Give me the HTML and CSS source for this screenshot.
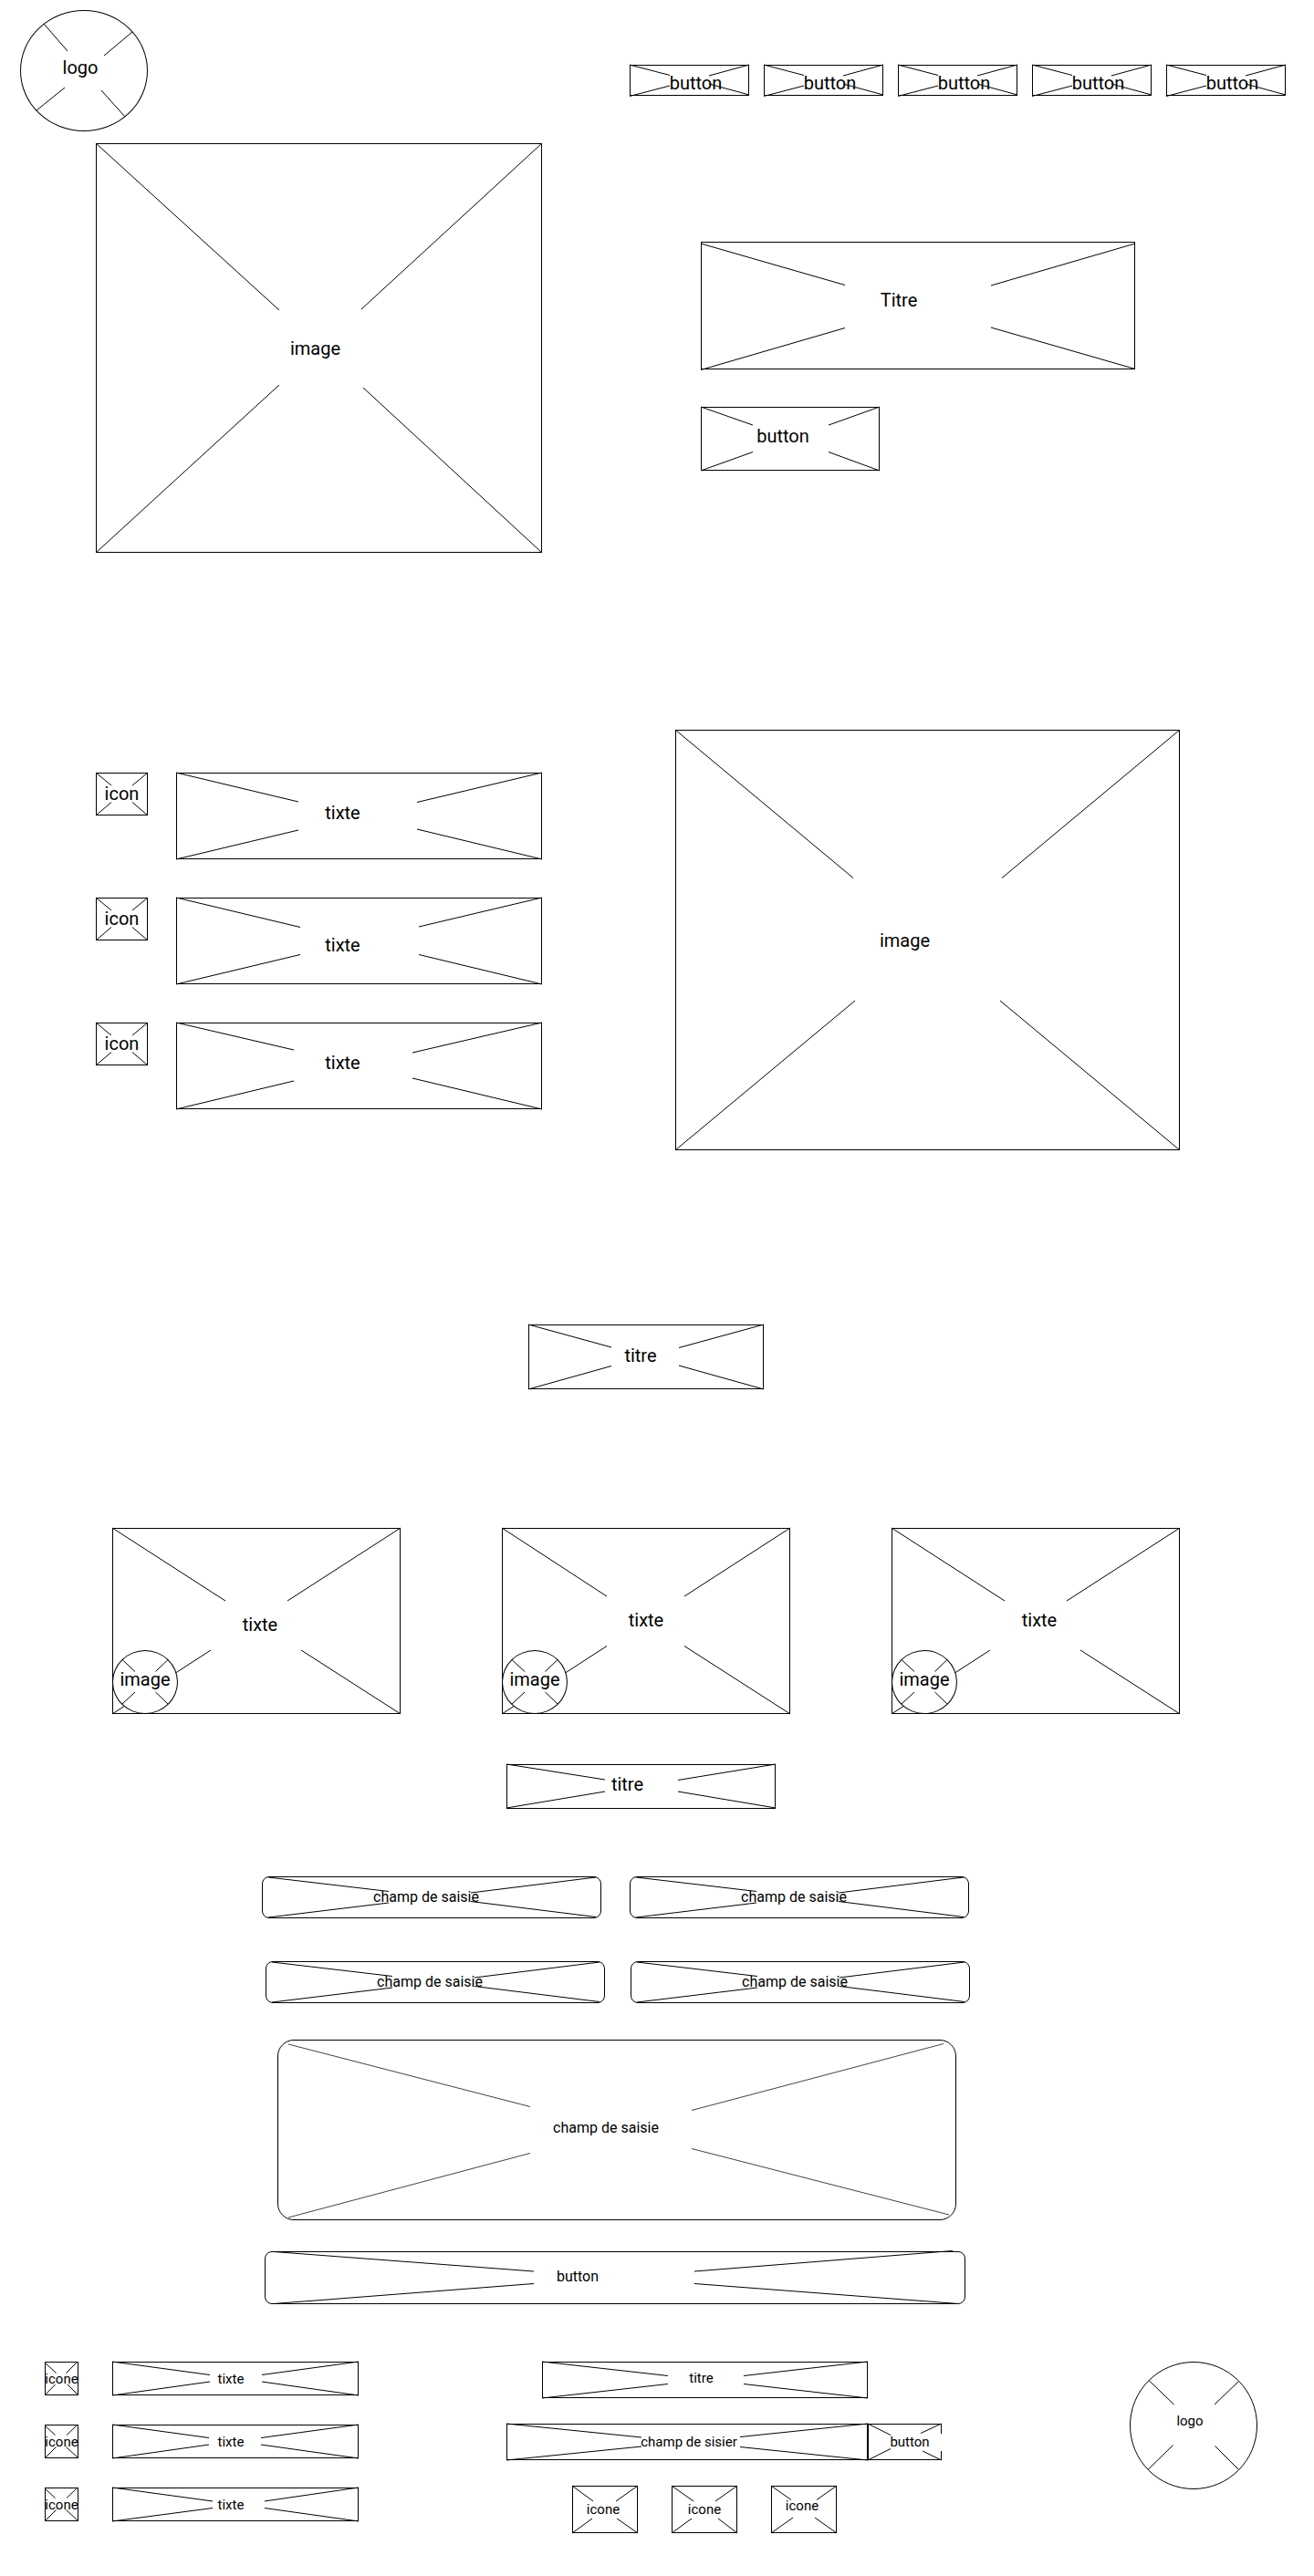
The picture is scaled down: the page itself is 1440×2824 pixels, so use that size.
FILE: index.html
```html
<!DOCTYPE html>
<html lang="fr">
<head>
<meta charset="utf-8">
<meta name="viewport" content="width=device-width, initial-scale=1">
<title>Wireframe</title>
<link rel="stylesheet" href="styles.css">
</head>
<body>
<header class="header">
  <a class="box round logo" href="#"><svg class="cross" viewBox="0 0 140 133" preserveAspectRatio="none"><path d="M26 15L52 45M123 24L92 50M49 85L18 110M89 88L115 117"/></svg>logo</a>
  <nav class="nav">
    <button class="box nav-button" type="button"><svg class="cross" viewBox="0 0 131 34" preserveAspectRatio="none"><path d="M0 0L44 11.5M131 0L87 12M44 23L0 34.5M87 21L131 33"/></svg>button</button>
    <button class="box nav-button" type="button"><svg class="cross" viewBox="0 0 131 34" preserveAspectRatio="none"><path d="M0 0L44 11.5M131 0L87 12M44 23L0 34.5M87 21L131 33"/></svg>button</button>
    <button class="box nav-button" type="button"><svg class="cross" viewBox="0 0 131 34" preserveAspectRatio="none"><path d="M0 0L44 11.5M131 0L87 12M44 23L0 34.5M87 21L131 33"/></svg>button</button>
    <button class="box nav-button" type="button"><svg class="cross" viewBox="0 0 131 34" preserveAspectRatio="none"><path d="M0 0L44 11.5M131 0L87 12M44 23L0 34.5M87 21L131 33"/></svg>button</button>
    <button class="box nav-button" type="button"><svg class="cross" viewBox="0 0 131 34" preserveAspectRatio="none"><path d="M0 0L44 11.5M131 0L87 12M44 23L0 34.5M87 21L131 33"/></svg>button</button>
  </nav>
</header>

<main>
  <section class="hero">
    <div class="box hero-image"><svg class="cross" viewBox="0 0 489 449" preserveAspectRatio="none"><path d="M0 0L201 183M489 0L291 182M201 265L0 449M293 268L489 449"/></svg>image</div>
    <div class="hero-content">
      <h1 class="box hero-title"><svg class="cross" viewBox="0 0 476 140" preserveAspectRatio="none"><path d="M0 2L158 47.5M476 2L318 48M158 94.5L0 140.5M318 94L476 139.5"/></svg>Titre</h1>
      <button class="box hero-button" type="button"><svg class="cross" viewBox="0 0 196 70" preserveAspectRatio="none"><path d="M0 0L57 20M196 0L140 20M57 49.5L0 70M140 49.5L196 70"/></svg>button</button>
    </div>
  </section>

  <section class="features">
    <ul class="feature-list">
      <li class="feature">
        <span class="box feature-icon"><svg class="cross" viewBox="0 0 57 47" preserveAspectRatio="none"><path d="M0 0L17 14M57 0L40 14M17 32.5L0 47M40 32.5L57 47"/></svg>icon</span>
        <p class="box feature-text raised"><svg class="cross" viewBox="0 0 401 95" preserveAspectRatio="none"><path d="M0 0L134 32M401 0L264 32.5M134 63L0 95M264 62L401 95"/></svg>tixte</p>
      </li>
      <li class="feature">
        <span class="box feature-icon"><svg class="cross" viewBox="0 0 57 47" preserveAspectRatio="none"><path d="M0 0L17 14M57 0L40 14M17 32.5L0 47M40 32.5L57 47"/></svg>icon</span>
        <p class="box feature-text lowered"><svg class="cross" viewBox="0 0 401 95" preserveAspectRatio="none"><path d="M0 0L136 32.5M401 0L266 32M136 62.5L0 95M266 62.5L401 95"/></svg>tixte</p>
      </li>
      <li class="feature">
        <span class="box feature-icon"><svg class="cross" viewBox="0 0 57 47" preserveAspectRatio="none"><path d="M0 0L17 14M57 0L40 14M17 32.5L0 47M40 32.5L57 47"/></svg>icon</span>
        <p class="box feature-text raised"><svg class="cross" viewBox="0 0 401 95" preserveAspectRatio="none"><path d="M0 0L129 30M401 0L259 33M129 64L0 95M259 61L401 95"/></svg>tixte</p>
      </li>
    </ul>
    <div class="box feature-image"><svg class="cross" viewBox="0 0 553 461" preserveAspectRatio="none"><path d="M0 0L195 162.5M553 0L358 162.5M197 297L0 461M356 297L553 461"/></svg>image</div>
  </section>

  <section class="testimonials">
    <h2 class="box testimonials-title"><svg class="cross" viewBox="0 0 258 71" preserveAspectRatio="none"><path d="M0 0L91 25M258 0L165 25.5M91 45.5L0 71M165 45L258 71"/></svg>titre</h2>
    <div class="cards">
      <article class="box card card-low"><svg class="cross" viewBox="0 0 316 204" preserveAspectRatio="none"><path d="M0 0L124 80M316 0L192 80M108 134L0 204M207 134L316 204"/></svg>tixte
        <div class="box round avatar"><svg class="cross" viewBox="0 0 72 70" preserveAspectRatio="none"><path d="M11 10.5L25 23.5M61 10.5L47.5 23.5M25 46L11 59M47.5 46L61 59"/></svg>image</div>
      </article>
      <article class="box card"><svg class="cross" viewBox="0 0 316 204" preserveAspectRatio="none"><path d="M0 0L115 75M316 0L200 75M115 129.5L0 204M200 129.5L316 204"/></svg>tixte
        <div class="box round avatar"><svg class="cross" viewBox="0 0 72 70" preserveAspectRatio="none"><path d="M11 10.5L25 23.5M61 10.5L47.5 23.5M25 46L11 59M47.5 46L61 59"/></svg>image</div>
      </article>
      <article class="box card card-shifted"><svg class="cross" viewBox="0 0 316 204" preserveAspectRatio="none"><path d="M0 0L124 80M316 0L192 80M108 134L0 204M207 134L316 204"/></svg>tixte
        <div class="box round avatar"><svg class="cross" viewBox="0 0 72 70" preserveAspectRatio="none"><path d="M11 10.5L25 23.5M61 10.5L47.5 23.5M25 46L11 59M47.5 46L61 59"/></svg>image</div>
      </article>
    </div>
  </section>

  <section class="contact">
    <h2 class="box contact-title"><svg class="cross" viewBox="0 0 295 49" preserveAspectRatio="none"><path d="M0 0L108 17M295 0L188 17.5M108 30L0 48M188 30L295 48"/></svg>titre</h2>
    <form class="form">
      <div class="form-row">
        <div class="field"><input class="input" type="text" placeholder="champ de saisie" aria-label="champ de saisie"><svg class="cross" viewBox="0 0 372 46" preserveAspectRatio="none"><path d="M7 1L139 16.5M366 1L229 18M139 29L7 45M229 27.5L366 44.5"/></svg></div>
        <div class="field"><input class="input" type="text" placeholder="champ de saisie" aria-label="champ de saisie"><svg class="cross" viewBox="0 0 372 46" preserveAspectRatio="none"><path d="M7 1L139 16.5M366 1L229 18M139 29L7 45M229 27.5L366 44.5"/></svg></div>
      </div>
      <div class="form-row form-row-inset">
        <div class="field"><input class="input" type="text" placeholder="champ de saisie" aria-label="champ de saisie"><svg class="cross" viewBox="0 0 372 46" preserveAspectRatio="none"><path d="M7 1L139 16.5M366 1L229 18M139 29L7 45M229 27.5L366 44.5"/></svg></div>
        <div class="field"><input class="input" type="text" placeholder="champ de saisie" aria-label="champ de saisie"><svg class="cross" viewBox="0 0 372 46" preserveAspectRatio="none"><path d="M7 1L139 16.5M366 1L229 18M139 29L7 45M229 27.5L366 44.5"/></svg></div>
      </div>
      <div class="field message"><textarea class="textarea" placeholder="champ de saisie" aria-label="champ de saisie"></textarea><svg class="cross light" viewBox="0 0 744 198" preserveAspectRatio="none"><path d="M12 5L277 73.5M730 4.5L454 77.5M277 124.5L12 195M454 119.5L736 192"/></svg></div>
      <button class="box submit" type="button"><svg class="cross" viewBox="0 0 768 58" preserveAspectRatio="none"><path d="M10 0.5L295 22M754 -0.5L471 22M295 35.5L10 57.5M471 35.5L760 57.5"/></svg>button</button>
    </form>
  </section>
</main>

<footer class="footer">
  <ul class="info-list">
    <li class="info">
      <span class="box info-icon"><svg class="cross" viewBox="0 0 37 37" preserveAspectRatio="none"><path d="M0 1L12.5 12.5M36 0L23.5 12.5M11.5 25L0 37M25 25L37 37"/></svg>icone</span>
      <p class="box info-text"><svg class="cross" viewBox="0 0 270 37" preserveAspectRatio="none"><path d="M0 0L107 14.5M270 0L164 14.5M107 22L0 37M164 22L270 37"/></svg>tixte</p>
    </li>
    <li class="info">
      <span class="box info-icon"><svg class="cross" viewBox="0 0 37 37" preserveAspectRatio="none"><path d="M0 1L11.5 11.5M36 0L24 11.5M12.5 24.5L0 37M23.5 24.5L37 37"/></svg>icone</span>
      <p class="box info-text"><svg class="cross" viewBox="0 0 270 37" preserveAspectRatio="none"><path d="M0 0L106 14.5M270 0L163 14.5M106 22L0 37M163 22L270 37"/></svg>tixte</p>
    </li>
    <li class="info">
      <span class="box info-icon"><svg class="cross" viewBox="0 0 37 37" preserveAspectRatio="none"><path d="M0 1L11.5 11.5M36 0L24 11.5M12.5 24.5L0 37M23.5 24.5L37 37"/></svg>icone</span>
      <p class="box info-text"><svg class="cross" viewBox="0 0 270 37" preserveAspectRatio="none"><path d="M0 0L110 15M270 0L167 15M110 22.5L0 37M167 22.5L270 37"/></svg>tixte</p>
    </li>
  </ul>

  <div class="newsletter">
    <h3 class="box newsletter-title"><svg class="cross" viewBox="0 0 357 40" preserveAspectRatio="none"><path d="M0 0L138 15.5M357 0L221 15.5M138 24.5L0 40M221 24.5L357 40"/></svg>titre</h3>
    <form class="newsletter-form">
      <div class="field"><input class="input newsletter-input" type="email" placeholder="champ de sisier" aria-label="champ de sisier"><svg class="cross" viewBox="0 0 396 40" preserveAspectRatio="none"><path d="M0 0L148 15M396 0L256 14.5M148 25L0 40M256 25.5L396 40"/></svg></div>
      <button class="box newsletter-button" type="button"><svg class="cross newsletter-cross" viewBox="0 0 81 40" preserveAspectRatio="none"><path d="M0 0L25 12.5M80.5 0L58 10.5M25 27.5L0 40M60 30L80.5 40M80.5 0V11M80.5 30V40"/></svg>button</button>
    </form>
    <div class="socials">
      <a class="box social" href="#"><svg class="cross" viewBox="0 0 72 52" preserveAspectRatio="none"><path d="M0 0L23 17M72 0L48 17M22 36L0 52M49 36L72 52"/></svg>icone</a>
      <a class="box social social-centered" href="#"><svg class="cross" viewBox="0 0 72 52" preserveAspectRatio="none"><path d="M0 0L24 17M72 0L48 17M22 36L0 52M51 36L72 52"/></svg>icone</a>
      <a class="box social social-raised" href="#"><svg class="cross" viewBox="0 0 72 52" preserveAspectRatio="none"><path d="M0 0L22 15.5M72 0L50 15.5M24 35L0 52M48 35L72 52"/></svg>icone</a>
    </div>
  </div>

  <a class="box round footer-logo" href="#"><svg class="cross" viewBox="0 0 140 140" preserveAspectRatio="none"><path d="M21 20.5L48.5 47M119.5 21.5L93 47M47.5 91.5L20 118.5M93.5 92.5L119.5 118.5"/></svg>logo</a>
</footer>
</body>
</html>
```

FILE: styles.css
```css
*,
*::before,
*::after {
  box-sizing: border-box;
}

body {
  margin: 0;
  background: #fff;
  color: #000;
  font: 400 20px/24px Roboto, "Liberation Sans", sans-serif;
}

h1,
h2,
h3,
p,
ul {
  margin: 0;
  padding: 0;
  font: inherit;
  list-style: none;
}

/* Crossed placeholder box with a label */
.box {
  position: relative;
  display: flex;
  align-items: center;
  justify-content: center;
  flex-shrink: 0;
  padding: 0;
  border: 1px solid #000;
  background: none;
  color: inherit;
  font: inherit;
  text-decoration: none;
}

.round {
  border-radius: 50%;
}

.cross {
  position: absolute;
  inset: -1px;
  width: calc(100% + 2px);
  height: calc(100% + 2px);
  overflow: visible;
  fill: none;
  stroke: #000;
  stroke-width: 1px;
  pointer-events: none;
}

.cross path {
  vector-effect: non-scaling-stroke;
}

/* Header */
.header {
  display: flex;
  justify-content: space-between;
  padding: 11px 31px 0 22px;
}

.logo {
  width: 140px;
  height: 133px;
  padding: 0 8px 8px 0;
}

.nav {
  display: flex;
  align-items: flex-start;
  gap: 16px;
  padding-top: 60px;
}

.nav-button {
  width: 131px;
  height: 34px;
  padding: 6px 0 0 14px;
}

/* Hero */
.hero {
  display: grid;
  grid-template-columns: 489fr 476fr;
  align-items: start;
  column-gap: 174px;
  padding: 13px 196px 0 105px;
}

.hero-image {
  aspect-ratio: 489 / 449;
  padding-right: 8px;
}

.hero-content {
  display: flex;
  flex-direction: column;
  gap: 41px;
  padding-top: 108px;
}

.hero-title {
  height: 140px;
  padding: 0 42px 12px 0;
}

.hero-button {
  width: 196px;
  height: 70px;
  padding: 0 16px 6px 0;
}

/* Features */
.features {
  display: grid;
  grid-template-columns: 489fr 553fr;
  align-items: start;
  column-gap: 146px;
  padding: 194px 147px 0 105px;
}

.feature-list {
  display: flex;
  flex-direction: column;
  gap: 42px;
  padding-top: 47px;
}

.feature {
  display: flex;
  align-items: flex-start;
  gap: 31px;
}

.feature-icon {
  width: 57px;
  height: 47px;
  padding-bottom: 2px;
}

.feature-text {
  flex: 1;
  height: 95px;
  padding-right: 36px;
}

.raised {
  padding-bottom: 8px;
}

.lowered {
  padding-top: 8px;
}

.feature-image {
  aspect-ratio: 553 / 461;
  padding-right: 50px;
}

/* Testimonials */
.testimonials {
  padding: 191px 147px 0 123px;
}

.testimonials-title {
  width: 258px;
  height: 71px;
  margin: 0 auto;
  padding: 0 12px 4px 0;
}

.cards {
  display: grid;
  grid-template-columns: repeat(3, 1fr);
  gap: 111px;
  padding-top: 152px;
}

.card {
  height: 204px;
  padding-bottom: 2px;
}

.card-low {
  padding: 8px 0 0 8px;
}

.card-shifted {
  padding-left: 8px;
}

.avatar {
  position: absolute;
  left: -1px;
  bottom: -1px;
  width: 72px;
  height: 70px;
  padding-bottom: 6px;
  background: #fff;
}

/* Contact */
.contact {
  padding: 55px 35px 0 0;
}

.contact-title {
  width: 295px;
  height: 49px;
  margin: 0 auto;
  padding: 0 30px 6px 0;
}

.form {
  display: flex;
  flex-direction: column;
  max-width: 831px;
  margin: 0 auto;
  padding: 74px 55px 0 0;
  font-size: 16px;
  line-height: 20px;
}

.form-row {
  display: flex;
  gap: 31px;
  padding-right: 1px;
}

.form-row-inset {
  gap: 28px;
  padding: 47px 0 40px 4px;
}

.field {
  position: relative;
  flex: 1;
}

.field .cross {
  inset: 0;
  width: 100%;
  height: 100%;
}

.input,
.textarea {
  display: block;
  width: 100%;
  margin: 0;
  border: 1px solid #000;
  border-radius: 8px;
  background: none;
  color: inherit;
  font: inherit;
  text-align: center;
}

.input {
  height: 46px;
  padding: 0 12px 2px 0;
}

.input::placeholder,
.textarea::placeholder {
  color: inherit;
  opacity: 1;
}

.message {
  margin: 0 15px 34px 17px;
}

.textarea {
  height: 198px;
  padding: 86px 24px 0 0;
  border-radius: 18px;
  resize: none;
}

.light {
  stroke: #444;
}

.submit {
  height: 58px;
  margin: 0 5px 0 3px;
  padding: 0 82px 2px 0;
  border-radius: 8px;
}

/* Footer */
.footer {
  display: grid;
  grid-template-columns: 344fr 477fr 184px;
  align-items: start;
  column-gap: 162px;
  padding: 63px 62px 47px 49px;
  font-size: 15px;
  line-height: 18px;
}

.info-list {
  display: flex;
  flex-direction: column;
  gap: 32px;
}

.info {
  display: flex;
  gap: 37px;
}

.info-icon {
  width: 37px;
  height: 37px;
}

.info-text {
  flex: 1;
  height: 37px;
  padding-right: 10px;
}

.newsletter {
  display: flex;
  flex-direction: column;
  gap: 28px;
}

.newsletter-title {
  height: 40px;
  margin: 0 81px 0 39px;
  padding: 0 8px 4px 0;
}

.newsletter-form {
  display: flex;
}

.newsletter-input {
  height: 40px;
  padding: 0 0 0 4px;
  border-radius: 0;
}

/* The right edge is open; its two stubs are part of the cross */
.newsletter-button {
  width: 81px;
  height: 40px;
  padding-left: 10px;
  border-right: 0;
}

.newsletter-cross {
  width: calc(100% + 1px);
}

.socials {
  display: flex;
  gap: 37px;
  padding-left: 72px;
}

.social {
  width: 72px;
  height: 52px;
  padding-right: 4px;
}

.social-centered {
  padding: 0;
}

.social-raised {
  padding-bottom: 8px;
}

.footer-logo {
  justify-self: end;
  width: 140px;
  height: 140px;
  padding: 0 8px 10px 0;
}
```
